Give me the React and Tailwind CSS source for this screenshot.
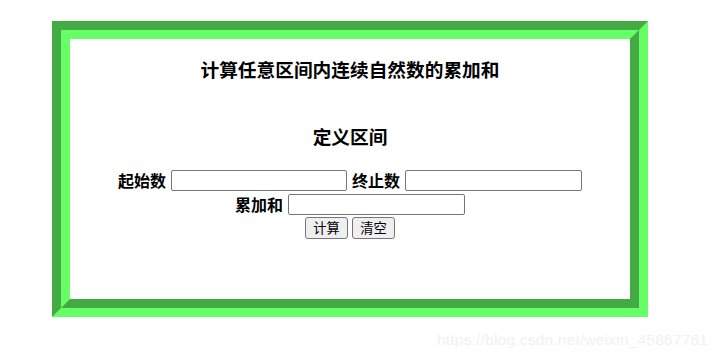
export default function App() {
  return (
    <div className="relative w-[717px] h-[359px] bg-white font-['Noto_Sans_CJK_SC','Noto_Sans',sans-serif] text-black overflow-hidden">
      <div className="absolute left-[52px] top-[21px] w-[596px] h-[296px] border-[9px] border-t-[#44aa44] border-l-[#44aa44] border-b-[#66ff66] border-r-[#66ff66]">
        <div className="h-full border-[9px] border-t-[#66ff66] border-l-[#66ff66] border-b-[#44aa44] border-r-[#44aa44] bg-white">
          <div className="flex flex-col items-center">
            <h3 className="mt-[17px] h-[26px] leading-[26px] text-[18.7px] font-bold">计算任意区间内连续自然数的累加和</h3>
            <h3 className="mt-[41px] h-[26px] leading-[26px] text-[18.7px] font-bold">定义区间</h3>
            <div className="mt-[19px] flex items-center gap-[5px] h-[24px] text-[16px] font-bold">
              <span>起始数</span>
              <input className="w-[176px] h-[21px] border border-[#767676] rounded-[2px] px-[2px] text-[13px]" />
              <span>终止数</span>
              <input className="w-[177px] h-[21px] border border-[#767676] rounded-[2px] px-[2px] text-[13px]" />
            </div>
            <div className="flex items-center gap-[5px] h-[24px] text-[16px] font-bold">
              <span>累加和</span>
              <input className="w-[177px] h-[21px] border border-[#767676] rounded-[2px] px-[2px] text-[13px]" />
            </div>
            <div className="flex items-center gap-[4px] h-[24px]">
              <button className="w-[43px] h-[22px] bg-[#efefef] border border-[#767676] rounded-[3px] text-[13.3px] leading-none">计算</button>
              <button className="w-[43px] h-[22px] bg-[#efefef] border border-[#767676] rounded-[3px] text-[13.3px] leading-none">清空</button>
            </div>
          </div>
        </div>
      </div>
      <div className="absolute left-[437px] top-[328px] text-[15.5px] text-[#f1f1f1] font-['Liberation_Sans',sans-serif] tracking-[0.2px]">
        https://blog.csdn.net/weixin_45867761
      </div>
    </div>
  )
}
